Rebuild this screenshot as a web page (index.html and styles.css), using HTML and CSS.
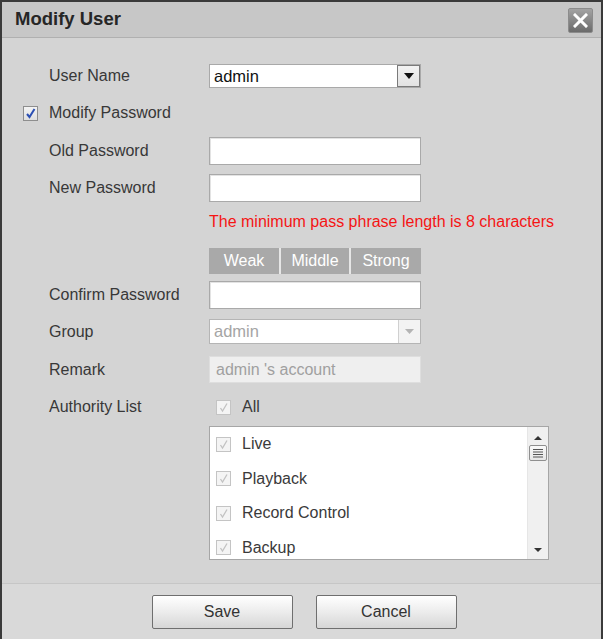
FILE: index.html
```html
<!DOCTYPE html>
<html>
<head>
<meta charset="utf-8">
<link rel="stylesheet" href="styles.css">
</head>
<body>
<div class="dialog">
  <div class="titlebar">
    <span class="title">Modify User</span>
    <span class="close"><svg width="15" height="15" viewBox="0 0 15 15"><path d="M2 2 L13 13 M13 2 L2 13" stroke="#fff" stroke-width="3" stroke-linecap="square"/></svg></span>
  </div>
  <div class="content">
    <div class="row r-user">
      <span class="label">User Name</span>
      <div class="select">
        <span class="val">admin</span>
        <span class="arrow"><svg width="10" height="6" viewBox="0 0 10 6"><path d="M0 0 H10 L5 6 Z" fill="#111"/></svg></span>
      </div>
    </div>
    <div class="row r-modify check-row">
      <span class="cb on"><svg width="11" height="11" viewBox="0 0 11 11"><path d="M2 6 L4.5 9 L9.5 1" stroke="#2b4fb3" stroke-width="2" fill="none"/></svg></span>
      <span class="label">Modify Password</span>
    </div>
    <div class="row r-old">
      <span class="label">Old Password</span>
      <div class="input"></div>
    </div>
    <div class="row r-new">
      <span class="label">New Password</span>
      <div class="input"></div>
    </div>
    <div class="row r-hint">
      <span class="label"></span>
      <span class="hint">The minimum pass phrase length is 8 characters</span>
    </div>
    <div class="row r-strength">
      <span class="label"></span>
      <div class="strength">
        <span class="cell c1">Weak</span>
        <span class="cell c2">Middle</span>
        <span class="cell c3">Strong</span>
      </div>
    </div>
    <div class="row r-confirm">
      <span class="label">Confirm Password</span>
      <div class="input"></div>
    </div>
    <div class="row r-group">
      <span class="label">Group</span>
      <div class="select disabled">
        <span class="val">admin</span>
        <span class="arrow"><svg width="9" height="5" viewBox="0 0 9 5"><path d="M0 0 H9 L4.5 5 Z" fill="#b4b4b4"/></svg></span>
      </div>
    </div>
    <div class="row r-remark">
      <span class="label">Remark</span>
      <div class="input disabled"><span class="val">admin 's account</span></div>
    </div>
    <div class="row r-auth">
      <span class="label">Authority List</span>
      <div class="auth-all">
        <span class="cb dis"><svg width="11" height="11" viewBox="0 0 11 11"><path d="M2.5 6 L4.5 9 L9 1.5" stroke="#c2c2c2" stroke-width="1.3" fill="none"/></svg></span>
        <span class="item-text">All</span>
      </div>
    </div>
    <div class="row r-list">
      <span class="label"></span>
      <div class="listbox">
        <div class="items">
          <div class="item"><span class="cb dis"><svg width="11" height="11" viewBox="0 0 11 11"><path d="M2.5 6 L4.5 9 L9 1.5" stroke="#c2c2c2" stroke-width="1.3" fill="none"/></svg></span><span class="item-text">Live</span></div>
          <div class="item"><span class="cb dis"><svg width="11" height="11" viewBox="0 0 11 11"><path d="M2.5 6 L4.5 9 L9 1.5" stroke="#c2c2c2" stroke-width="1.3" fill="none"/></svg></span><span class="item-text">Playback</span></div>
          <div class="item"><span class="cb dis"><svg width="11" height="11" viewBox="0 0 11 11"><path d="M2.5 6 L4.5 9 L9 1.5" stroke="#c2c2c2" stroke-width="1.3" fill="none"/></svg></span><span class="item-text">Record Control</span></div>
          <div class="item"><span class="cb dis"><svg width="11" height="11" viewBox="0 0 11 11"><path d="M2.5 6 L4.5 9 L9 1.5" stroke="#c2c2c2" stroke-width="1.3" fill="none"/></svg></span><span class="item-text">Backup</span></div>
        </div>
        <div class="scrollbar">
          <span class="sarrow"><svg width="8" height="4" viewBox="0 0 8 4"><path d="M0 4 H8 L4 0 Z" fill="#333"/></svg></span>
          <span class="thumb"><svg width="12" height="10" viewBox="0 0 12 10"><path d="M1 1.5 H11 M1 4 H11 M1 6.5 H11 M1 9 H11" stroke="#555" stroke-width="1"/></svg></span>
          <span class="track"></span>
          <span class="sarrow"><svg width="8" height="4" viewBox="0 0 8 4"><path d="M0 0 H8 L4 4 Z" fill="#333"/></svg></span>
        </div>
      </div>
    </div>
  </div>
  <div class="footer">
    <button class="btn">Save</button>
    <button class="btn">Cancel</button>
  </div>
</div>
</body>
</html>
```

FILE: styles.css
```css
* { box-sizing: border-box; }
html, body { margin: 0; padding: 0; background: #d4d4d4; }
body { font-family: "Liberation Sans", Arial, sans-serif; font-size: 16px; color: #383838; }

.dialog {
  width: 603px;
  height: 639px;
  border-top: 2px solid #3a3a3a;
  border-left: 2px solid #3a3a3a;
  border-right: 2px solid #3a3a3a;
  background: #d4d4d4;
  display: flex;
  flex-direction: column;
}

.titlebar {
  height: 36px;
  background: #c7c7c7;
  border-bottom: 1px solid #b0b0b0;
  display: flex;
  align-items: center;
  justify-content: space-between;
  padding: 0 8px 0 13px;
}
.title { font-size: 18.5px; font-weight: bold; color: #262626; margin-top: -1px; }
.close {
  width: 25px; height: 25px;
  margin-top: 2px;
  border-radius: 2px;
  background: linear-gradient(#a3a3a3, #6b6b6b);
  border: 1px solid #8c8c8c;
  display: flex; align-items: center; justify-content: center;
}

.content { flex: 1; }
.row { display: flex; align-items: center; padding-left: 47px; }
.label { width: 160px; flex: none; }
.check-row { padding-left: 21px; }
.check-row .cb { margin-right: 11px; }

.r-user { margin-top: 26px; height: 24px; }
.r-modify { margin-top: 13px; height: 24px; }
.r-old { margin-top: 12px; height: 28px; }
.r-new { margin-top: 9px; height: 28px; }
.r-hint { margin-top: 10px; height: 20px; }
.r-strength { margin-top: 16px; height: 26px; }
.r-confirm { margin-top: 7px; height: 28px; }
.r-group { margin-top: 10px; height: 25px; }
.r-remark { margin-top: 12px; height: 27px; }
.r-auth { margin-top: 14px; height: 20px; }
.r-list { margin-top: 9px; height: 134px; align-items: stretch; }

.input {
  width: 212px; height: 100%;
  background: #fff;
  border: 1px solid #a9a9a9;
  box-shadow: inset 1px 1px 0 #e3e3e3;
  display: flex; align-items: center; padding-left: 6px;
}
.input.disabled { background: #efefef; border-color: #dedede; box-shadow: none; color: #a0a0a0; }

.select {
  width: 212px; height: 100%;
  background: #fff;
  border: 1px solid #a9a9a9;
  display: flex; align-items: center; justify-content: space-between;
}
.select .val { padding-left: 4px; color: #111; font-size: 16.5px; }
.select .arrow {
  width: 23px; height: 100%;
  background: linear-gradient(#f2f2f2, #e2e2e2);
  border: 1px solid #7a7a7a;
  display: flex; align-items: center; justify-content: center;
}
.select.disabled { border-color: #b5b5b5; }
.select.disabled .val { color: #a5a5a5; padding-left: 4px; }
.select.disabled .arrow { background: #f3f3f3; border: none; border-left: 1px solid #d0d0d0; width: 22px; }

.hint { color: #f51414; }

.strength {
  width: 212px; height: 100%;
  display: flex; gap: 2px;
  background: #e6e6e6;
}
.cell {
  background: #a9a9a9; color: #fff;
  display: flex; align-items: center; justify-content: center;
}
.c1 { width: 70px; }
.c2 { width: 68px; }
.c3 { width: 70px; }

.cb {
  width: 15px; height: 15px; flex: none;
  display: flex; align-items: center; justify-content: center;
}
.cb.on { border: 1px solid #8e8e8e; background: linear-gradient(#f4f4f4, #dedede); }
.cb.dis { border: 1px solid #c4c4c4; background: #f4f4f4; }

.auth-all { display: flex; align-items: center; padding-left: 7px; }
.item-text { margin-left: 11px; color: #3a3a3a; }

.listbox {
  width: 340px;
  background: #fff;
  border: 1px solid #a6a6a6;
  display: flex;
}
.items { flex: 1; }
.item { height: 34.5px; display: flex; align-items: center; padding-left: 6px; }

.scrollbar {
  width: 21px;
  background: #f0f0f0;
  border-left: 1px solid #e6e6e6;
  display: flex; flex-direction: column; align-items: center;
  padding: 6px 0 5px;
}
.sarrow { height: 9px; display: flex; align-items: center; }
.thumb {
  width: 18px; height: 16px; margin-top: 3px;
  border: 1px solid #8f8f8f; border-radius: 2px;
  background: linear-gradient(#fafafa, #e6e6e6);
  display: flex; align-items: center; justify-content: center;
}
.track { flex: 1; }

.footer {
  height: 56px;
  margin-top: 23px;
  border-top: 1px solid #c6c6c6;
  background: #d9d9d9;
  display: flex; justify-content: center; align-items: flex-start;
  gap: 23px;
  padding-top: 11px;
  padding-left: 5px;
}
.btn {
  width: 141px; height: 34px;
  font-family: "Liberation Sans", Arial, sans-serif;
  font-size: 16px; color: #333;
  border: 1px solid #6f6f6f; border-radius: 2px;
  background: linear-gradient(#ffffff, #ececec 50%, #d6d6d6);
  padding: 0;
}
```
